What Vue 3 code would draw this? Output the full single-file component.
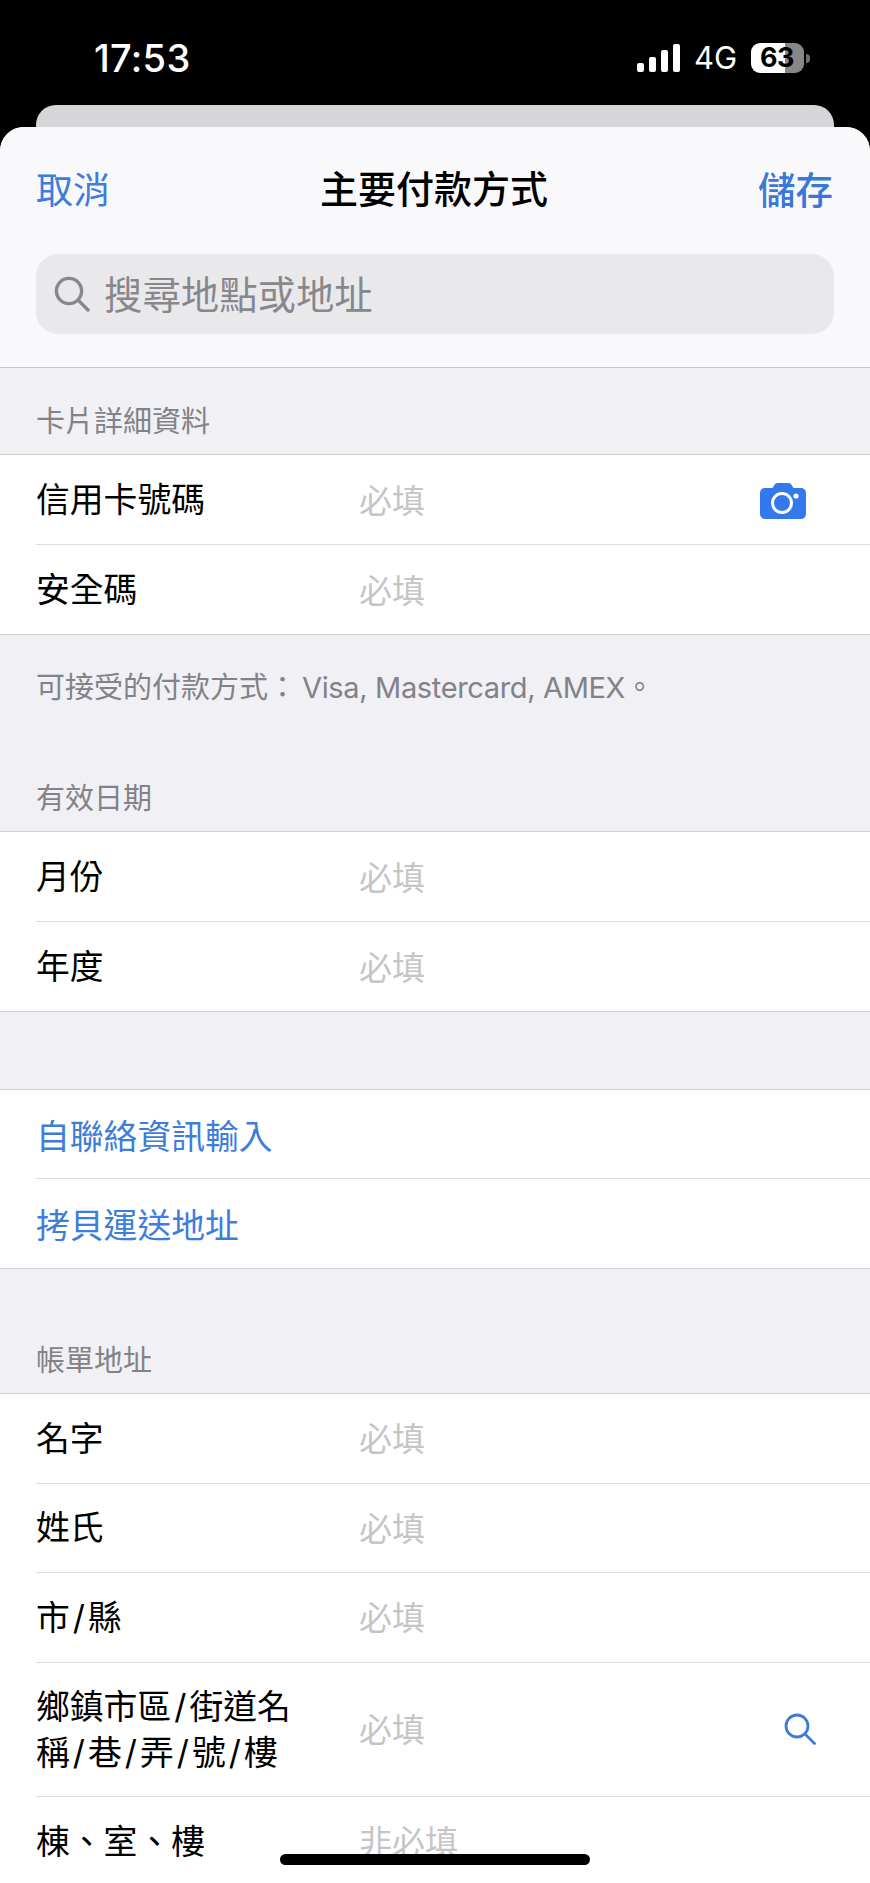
<script setup>
const cardRows = [
  { label: ["信用卡號碼"], hint: "必填", icon: "camera" },
  { label: ["安全碼"], hint: "必填" },
];
const dateRows = [
  { label: ["月份"], hint: "必填" },
  { label: ["年度"], hint: "必填" },
];
// label parts get a roomier slash between them
const billingRows = [
  { label: ["名字"], hint: "必填" },
  { label: ["姓氏"], hint: "必填" },
  { label: ["市", "縣"], hint: "必填" },
  { label: ["鄉鎮市區", "街道名稱", "巷", "弄", "號", "樓"], hint: "必填", icon: "search", tall: true },
  { label: ["棟、室、樓"], hint: "非必填" },
];
const groups = [
  { title: "卡片詳細資料", rows: cardRows, note: true },
  { title: "有效日期", rows: dateRows },
];
</script>

<template>
  <div class="screen">
    <!-- status bar -->
    <div class="status">
      <span class="time">17:53</span>
      <div class="status-right">
        <div class="signal">
          <i style="height: 9px"></i>
          <i style="height: 15px"></i>
          <i style="height: 22px"></i>
          <i style="height: 28px"></i>
        </div>
        <span class="net">4G</span>
        <div class="battery">
          <div class="battery-body"><span>63</span></div>
          <div class="battery-nub"></div>
        </div>
      </div>
    </div>

    <div class="back-card"></div>

    <div class="sheet">
      <!-- header -->
      <div class="header">
        <div class="nav">
          <span class="nav-btn">取消</span>
          <span class="nav-title">主要付款方式</span>
          <span class="nav-btn nav-save">儲存</span>
        </div>
        <div class="search">
          <svg class="search-icon" viewBox="0 0 36 36" fill="none" stroke="#88888c" stroke-width="3.4" stroke-linecap="round">
            <circle cx="15" cy="15" r="12.6" />
            <path d="M24.4 24.4 34 34" />
          </svg>
          <span class="search-text">搜尋地點或地址</span>
        </div>
      </div>

      <!-- card + date groups -->
      <section v-for="g in groups" :key="g.title" class="group">
        <div class="group-title">{{ g.title }}</div>
        <div class="list">
          <div v-for="r in g.rows" :key="r.label[0]" class="row">
            <span class="label">{{ r.label[0] }}</span>
            <span class="hint">{{ r.hint }}</span>
            <svg v-if="r.icon === 'camera'" class="camera" viewBox="0 0 46 36">
              <path
                fill="#3478ee"
                d="M5 5h7.5l2-3.2C15.2.7 16.300 0 17.600 0h10.800c1.300 0 2.400.7 3.100 1.800l2 3.200H41c2.800 0 5 2.200 5 5v21c0 2.800-2.200 5-5 5H5c-2.800 0-5-2.200-5-5V10c0-2.800 2.200-5 5-5Z"
              />
              <circle cx="22" cy="20" r="9.500" fill="none" stroke="#fff" stroke-width="3" />
              <circle cx="36" cy="13" r="2.600" fill="#fff" />
            </svg>
          </div>
        </div>
        <div v-if="g.note" class="note">可接受的付款方式：<span class="note-latin">Visa, Mastercard, AMEX</span>。</div>
      </section>

      <!-- shortcuts -->
      <div class="list links">
        <div class="row"><span class="link">自聯絡資訊輸入</span></div>
        <div class="row"><span class="link">拷貝運送地址</span></div>
      </div>

      <!-- billing -->
      <section class="group billing">
        <div class="group-title">帳單地址</div>
        <div class="list">
          <div v-for="r in billingRows" :key="r.label[0]" class="row" :class="{ 'row-tall': r.tall }">
            <span class="label">
              <template v-for="(part, i) in r.label" :key="part"><span v-if="i" class="slash">/</span>{{ part }}</template>
            </span>
            <span class="hint">{{ r.hint }}</span>
            <svg v-if="r.icon === 'search'" class="row-search" viewBox="0 0 32 32" fill="none" stroke="#3d7bd8" stroke-width="2.800" stroke-linecap="round">
              <circle cx="13" cy="13" r="11" />
              <path d="M21 21l9.500 9.500" />
            </svg>
          </div>
        </div>
      </section>
    </div>

    <div class="home-bar"></div>
  </div>
</template>

<style scoped>
.screen {
  position: relative;
  width: 870px;
  height: 1883px;
  overflow: hidden;
  background: #000;
  font-family: "Inter", "Noto Sans CJK TC", sans-serif;
}

/* ── Status bar ─────────────────────────────── */
.status {
  height: 105px;
  display: flex;
  justify-content: space-between;
  align-items: flex-start;
  padding: 0 60px 0 94px;
  box-sizing: border-box;
  color: #fff;
}
.time {
  margin-top: 36px;
  font-size: 38px;
  line-height: 44px;
  font-weight: 500;
  letter-spacing: 0.3px;
}
.status-right {
  display: flex;
  align-items: center;
  margin-top: 43px;
  height: 30px;
}
.signal {
  display: flex;
  align-items: flex-end;
  gap: 5px;
  height: 28px;
  width: 43px;
}
.signal i {
  display: block;
  width: 7px;
  background: #fff;
  border-radius: 2px;
}
.net {
  margin-left: 14px;
  font-size: 31px;
  line-height: 30px;
  font-weight: 400;
  width: 43px;
}
.battery {
  display: flex;
  align-items: center;
  margin-left: 14px;
}
.battery-body {
  width: 53px;
  height: 30px;
  border-radius: 9px;
  background: linear-gradient(to right, #fff 0, #fff 34px, #87878a 34px);
  display: flex;
  align-items: center;
  padding-left: 9px;
  box-sizing: border-box;
  color: #000;
  font-size: 27px;
  font-weight: 700;
  letter-spacing: -0.5px;
  line-height: 30px;
}
.battery-nub {
  width: 4px;
  height: 9px;
  margin-left: 2px;
  background: #6f6f72;
  border-radius: 0 4px 4px 0;
}

.back-card {
  height: 22px;
  margin: 0 36px;
  background: #d6d6d8;
  border-radius: 20px 20px 0 0;
}

/* ── Sheet ──────────────────────────────────── */
.sheet {
  background: #f0f0f5;
  border-radius: 24px 24px 0 0;
  overflow: hidden;
}
.header {
  height: 241px;
  box-sizing: border-box;
  background: #f9f9fb;
  border-bottom: 1px solid #c6c6c9;
  padding: 0 36px;
}
.nav {
  height: 127px;
  display: flex;
  align-items: center;
  justify-content: space-between;
}
.nav-btn {
  font-size: 37px;
  line-height: 52px;
  color: #3d7ddb;
}
.nav-save {
  font-size: 37.500px;
  font-weight: 500;
  color: #3a78d8;
  margin-right: 1px;
}
.nav-title {
  font-size: 38px;
  line-height: 52px;
  font-weight: 500;
  color: #000;
  margin-top: -3px;
}
.search {
  height: 80px;
  display: flex;
  align-items: center;
  gap: 14px;
  padding-left: 18px;
  background: #e9e9ec;
  border-radius: 22px;
  font-size: 38.400px;
  color: #88888c;
}
.search-text {
  margin-top: -4px;
}
.search-icon {
  width: 36px;
  height: 36px;
  flex-shrink: 0;
}

/* ── Groups ─────────────────────────────────── */
.group-title {
  height: 86px;
  box-sizing: border-box;
  padding: 32px 36px 0;
  font-size: 29px;
  line-height: 44px;
  color: #828287;
}
.list {
  background: #fff;
  border-top: 1px solid #d2d2d5;
  border-bottom: 1px solid #d2d2d5;
}
.row {
  position: relative;
  display: flex;
  align-items: center;
  box-sizing: border-box;
  height: 90px;
  margin-left: 36px;
  padding-right: 36px;
  border-bottom: 1px solid #dedee0;
}
.row:last-child {
  height: 89px;
  border-bottom: none;
}
.label {
  width: 323px;
  flex-shrink: 0;
  padding-right: 44px;
  box-sizing: border-box;
  margin-top: 1px;
  font-size: 33.800px;
  line-height: 46px;
  color: #000;
}
.slash {
  margin: 0 3px;
}
.hint {
  margin-top: -2px;
  font-size: 33px;
  color: #c5c5c7;
}
.camera {
  margin-left: auto;
  margin-right: 28px;
  margin-top: 3px;
  width: 46px;
  height: 36px;
}
.row-search {
  margin-left: auto;
  margin-right: 18px;
  width: 32px;
  height: 32px;
}
.note {
  height: 110px;
  padding: 28px 36px 0;
  box-sizing: border-box;
  font-family: "Noto Sans CJK TC", sans-serif;
  font-size: 29px;
  line-height: 44px;
  color: #828287;
}
.note-latin {
  font-family: "Inter", sans-serif;
  letter-spacing: -0.35px;
  margin-left: 5px;
}
.links {
  margin-top: 77px;
}
.links .row {
  height: 89px;
}
.link {
  font-size: 33.800px;
  color: #3d7ddb;
}
.billing {
  margin-top: 38px;
}
.billing .list {
  border-bottom: none;
  padding-bottom: 120px;
}
.billing .row {
  height: 89.500px;
}
.billing .row-tall {
  height: 134px;
}

.home-bar {
  position: absolute;
  left: 280px;
  top: 1854px;
  width: 310px;
  height: 11px;
  background: #000;
  border-radius: 6px;
}
</style>
